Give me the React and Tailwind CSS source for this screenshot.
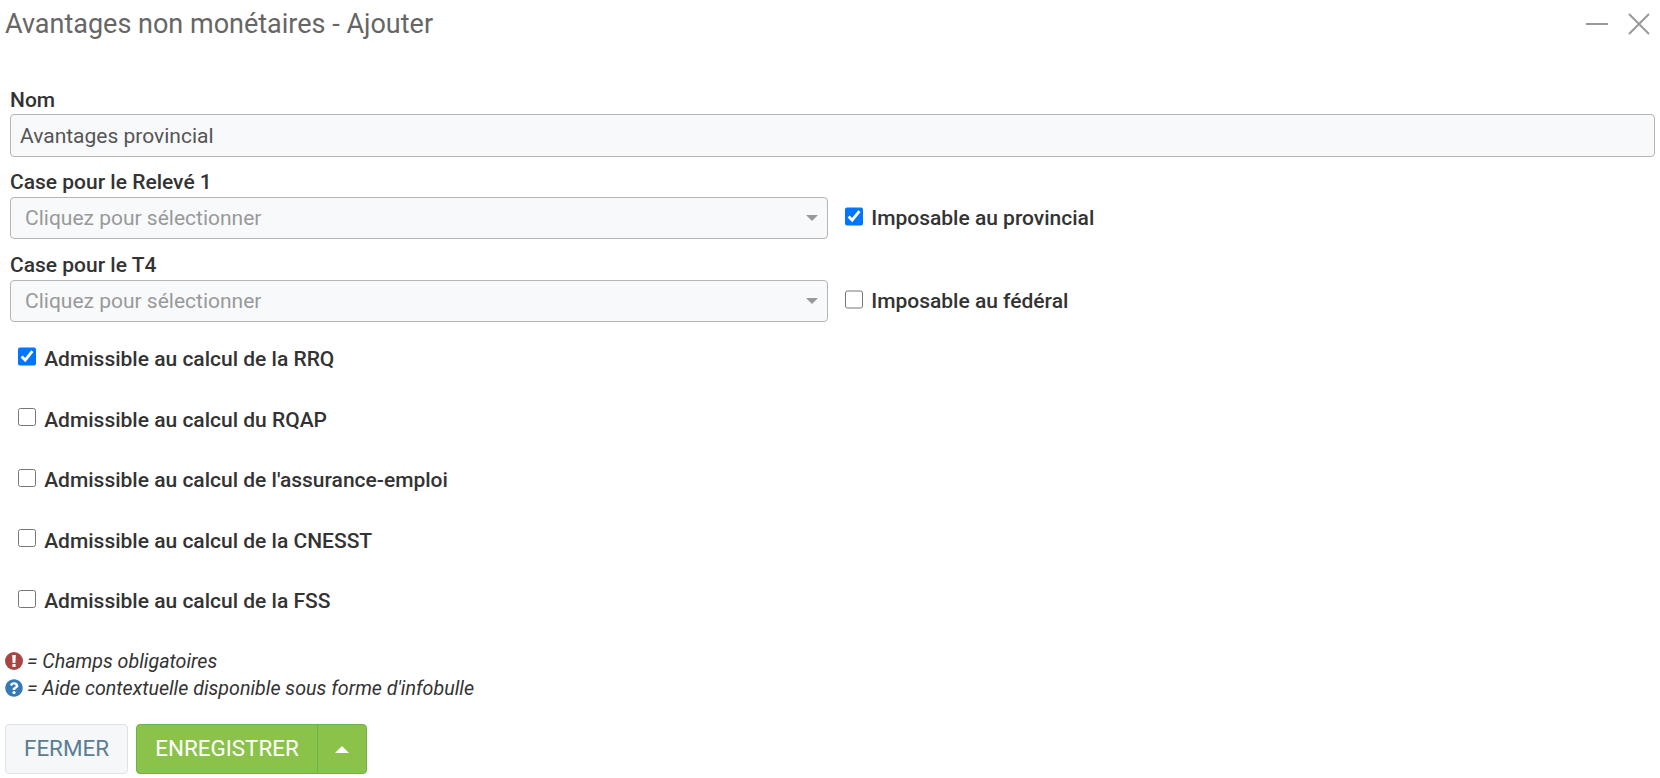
import { FaQuestionCircle } from 'react-icons/fa';

const ROW_LABELS = [
  { label: 'Admissible au calcul de la RRQ', checked: true },
  { label: 'Admissible au calcul du RQAP', checked: false },
  { label: "Admissible au calcul de l'assurance-emploi", checked: false },
  { label: 'Admissible au calcul de la CNESST', checked: false },
  { label: 'Admissible au calcul de la FSS', checked: false },
];

const CheckRow = ({ label, checked, boxClass }) => (
  <label className="flex items-center gap-[8px] text-[21px] font-medium leading-[26px] text-[#333333]">
    <input type="checkbox" defaultChecked={checked} className={`m-0 h-[18.2px] w-[18.2px] accent-[#0075ff] ${boxClass}`} />
    {label}
  </label>
);

const SelectRow = ({ title, check, checked }) => (
  <div>
    <div className="h-[29px] pl-[10px] pt-[1px] text-[21px] font-medium leading-[26px] text-[#333333]">{title}</div>
    <div className="flex items-center">
      <div className="ml-[10px] flex h-[42px] w-[818px] items-center justify-between rounded-[4px] border border-[#b5b5b5] bg-[#f8f9fb] pl-[14px] pr-[8px] text-[21px] text-[#999999]">
        <span className="pt-[2px]">Cliquez pour sélectionner</span>
        <svg width="12" height="6" viewBox="0 0 12 6" className="mr-[1px]">
          <path d="M0 0h12L6 6z" fill="#999999" />
        </svg>
      </div>
      <div className="ml-[17px]">
        <CheckRow label={check} checked={checked} boxClass="mb-[3px]" />
      </div>
    </div>
  </div>
);

export default function App() {
  return (
    <div className="h-[778px] w-[1660px] overflow-hidden bg-white font-['Roboto',sans-serif]">
      {/* Titre */}
      <div className="flex h-[48px] items-center justify-between pl-[5px] pr-[10px]">
        <h1 className="text-[27px] font-normal text-[#666666]">Avantages non monétaires - Ajouter</h1>
        <div className="flex items-center gap-[20px]">
          <svg width="22" height="22" viewBox="0 0 22 22" fill="none" stroke="#999999" strokeWidth="2">
            <path d="M0 11h22" />
          </svg>
          <svg width="22" height="22" viewBox="0 0 22 22" fill="none" stroke="#999999" strokeWidth="2">
            <path d="M1 1l20 20M21 1L1 21" />
          </svg>
        </div>
      </div>

      <div className="mt-[38px]">
        <div className="h-[28px] pl-[10px] pt-[1px] text-[21px] font-medium leading-[26px] text-[#333333]">Nom</div>
        <div className="ml-[10px] flex h-[43px] w-[1645px] items-center rounded-[4px] border border-[#b5b5b5] bg-[#f8f9fb] pl-[9px] pt-[2px] text-[21px] text-[#555555]">
          Avantages provincial
        </div>
      </div>

      <div className="mt-[11px] flex flex-col gap-[12px]">
        <SelectRow title="Case pour le Relevé 1" check="Imposable au provincial" checked />
        <SelectRow title="Case pour le T4" check="Imposable au fédéral" checked={false} />
      </div>

      <div className="mt-[24px] flex flex-col gap-[34.6px] pl-[18px]">
        {ROW_LABELS.map((row) => (
          <CheckRow key={row.label} label={row.label} checked={row.checked} boxClass="mb-[5px]" />
        ))}
      </div>

      <div className="mt-[34px] pl-[5px] text-[19.65px] italic leading-[27px] text-[#333333]">
        <div className="flex items-center gap-[4px]">
          <svg width="18" height="18" viewBox="0 0 18 18" className="mb-[2px]">
            <circle cx="9" cy="9" r="9" fill="#a94442" />
            <path d="M7.2 3h3.6l-.4 8H7.6z" fill="#ffffff" />
            <rect x="7.4" y="12" width="3.2" height="3" rx="0.5" fill="#ffffff" />
          </svg>
          = Champs obligatoires
        </div>
        <div className="flex items-center gap-[4px]">
          <FaQuestionCircle className="mb-[2px] text-[18px] text-[#337ab7]" />
          = Aide contextuelle disponible sous forme d'infobulle
        </div>
      </div>

      <div className="mt-[22px] flex gap-[8px] pl-[5px]">
        <div className="flex h-[50px] w-[123px] items-center justify-center rounded-[4px] border border-[#dde3e8] bg-[#f5f7f9] pb-[2px] text-[22.4px] text-[#5a7d94]">
          FERMER
        </div>
        <div className="flex h-[50px] w-[231px] rounded-[4px] border border-[#6bb34a] bg-[#8bc34a] text-[22.4px] text-white">
          <div className="flex w-[181px] items-center justify-center border-r border-[#6bb34a] pb-[2px]">ENREGISTRER</div>
          <div className="flex flex-1 items-center justify-center">
            <svg width="14" height="7" viewBox="0 0 14 7">
              <path d="M0 7h14L7 0z" fill="#ffffff" />
            </svg>
          </div>
        </div>
      </div>
    </div>
  );
}
